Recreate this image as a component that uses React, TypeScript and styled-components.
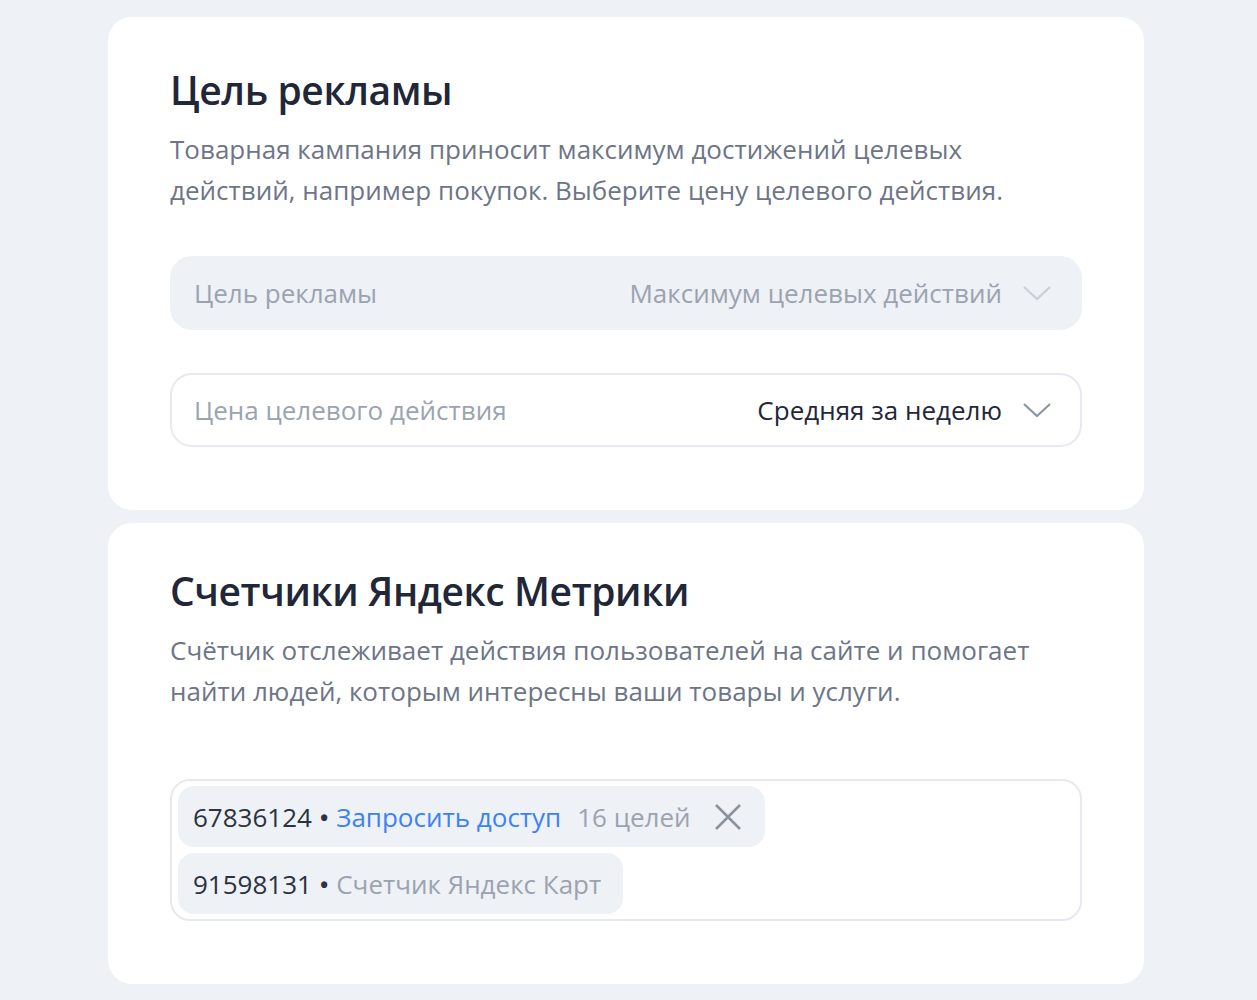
import React, { FC } from 'react';
import styled, { createGlobalStyle } from 'styled-components';

const GlobalStyle = createGlobalStyle`
  html, body {
    margin: 0;
    padding: 0;
    background: #eef1f5;
  }
  body {
    font-family: 'Open Sans', 'Noto Sans', sans-serif;
    -webkit-font-smoothing: antialiased;
  }
`;

const Page = styled.div`
  display: flex;
  flex-direction: column;
  gap: 13px;
  width: 1036px;
  padding: 17px 0 16px 108px;
`;

const Card = styled.section<{ topPad?: number }>`
  background: #ffffff;
  border-radius: 24px;
  padding: ${({ topPad = 46 }) => topPad}px 62px 63px;
`;

const Title = styled.h2`
  margin: 0;
  font-size: 39px;
  line-height: 54px;
  font-weight: 600;
  color: #1f2738;
  letter-spacing: -0.4px;
`;

const Description = styled.p`
  margin: 12px 0 0;
  font-size: 26px;
  line-height: 41px;
  color: #6d7587;
  max-width: 880px;
`;

interface SelectBoxProps {
  filled?: boolean;
}

const SelectBox = styled.div<SelectBoxProps>`
  display: flex;
  align-items: center;
  height: 74px;
  box-sizing: border-box;
  padding: 0 28px 0 22px;
  border-radius: 22px;
  background: ${({ filled }) => (filled ? '#eef1f6' : '#ffffff')};
  border: 2px solid ${({ filled }) => (filled ? '#eef1f6' : '#e6e9ef')};
  font-size: 26px;
`;

const SelectLabel = styled.span`
  color: #9ba3b1;
  flex: 1;
`;

const SelectValue = styled.span<{ muted?: boolean }>`
  color: ${({ muted }) => (muted ? '#9ba3b1' : '#1f2738')};
  margin-right: 20px;
`;

const Fields = styled.div`
  display: flex;
  flex-direction: column;
  gap: 43px;
  margin-top: 45px;
`;

const TagBox = styled.div`
  margin-top: 67px;
  border: 2px solid #e6e9ef;
  border-radius: 20px;
  padding: 5px 6px;
  display: flex;
  flex-direction: column;
  align-items: flex-start;
  gap: 6px;
`;

const Chip = styled.div`
  display: flex;
  align-items: center;
  height: 61px;
  padding: 0 22px 0 15px;
  background: #eef1f6;
  border-radius: 16px;
  font-size: 26px;
  color: #2b3240;
`;

const Dot = styled.span`
  margin: 0 8px;
  font-size: 22px;
  font-weight: 700;
  color: #2b3240;
`;

const Link = styled.span`
  color: #3b82f6;
  margin-right: 16px;
`;

const Muted = styled.span`
  color: #9ba3b1;
`;

const CloseButton = styled.span`
  display: flex;
  margin-left: 22px;
`;

const Chevron: FC<{ color: string }> = ({ color }) => (
  <svg width="30" height="18" viewBox="0 0 30 18">
    <path d="M2 3 L15 15 L28 3" fill="none" stroke={color} strokeWidth="2.2" />
  </svg>
);

const Cross = () => (
  <svg width="30" height="30" viewBox="0 0 30 30">
    <path d="M3 3 L27 27 M27 3 L3 27" stroke="#8a92a0" strokeWidth="2.6" />
  </svg>
);

const App: FC = () => (
  <>
    <GlobalStyle />
    <Page>
      <Card>
        <Title>Цель рекламы</Title>
        <Description>
          Товарная кампания приносит максимум достижений целевых действий, например покупок.
          Выберите цену целевого действия.
        </Description>
        <Fields>
          <SelectBox filled>
            <SelectLabel>Цель рекламы</SelectLabel>
            <SelectValue muted>Максимум целевых действий</SelectValue>
            <Chevron color="#c9ced8" />
          </SelectBox>
          <SelectBox>
            <SelectLabel>Цена целевого действия</SelectLabel>
            <SelectValue>Средняя за неделю</SelectValue>
            <Chevron color="#8e96a4" />
          </SelectBox>
        </Fields>
      </Card>
      <Card topPad={41}>
        <Title>Счетчики Яндекс Метрики</Title>
        <Description>
          Счётчик отслеживает действия пользователей на сайте и помогает найти людей, которым
          интересны ваши товары и услуги.
        </Description>
        <TagBox>
          <Chip>
            67836124<Dot>•</Dot>
            <Link>Запросить доступ</Link>
            <Muted>16 целей</Muted>
            <CloseButton>
              <Cross />
            </CloseButton>
          </Chip>
          <Chip>
            91598131<Dot>•</Dot>
            <Muted>Счетчик Яндекс Карт</Muted>
          </Chip>
        </TagBox>
      </Card>
    </Page>
  </>
);

export default App;
